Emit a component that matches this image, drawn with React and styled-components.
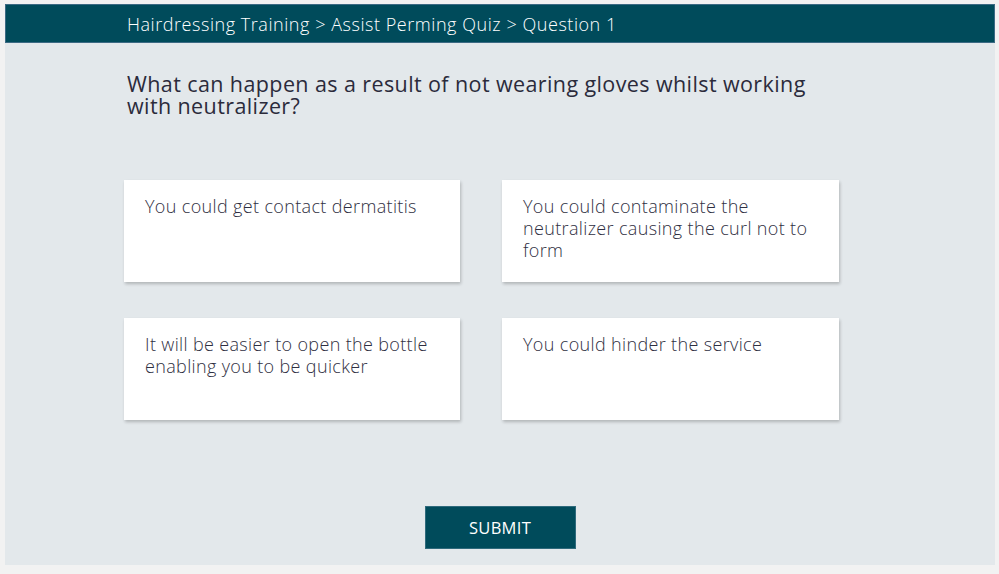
import React from "react";
import styled, { createGlobalStyle } from "styled-components";

const Global = createGlobalStyle`
  html, body { margin: 0; padding: 0; background: #f2f2f2; }
  body { font-family: "Open Sans", "Noto Sans", sans-serif; }
  * { box-sizing: border-box; }
`;

const Frame = styled.div`
  margin: 4px 0 0 5px;
  width: 990px;
  height: 561px;
  background: #e3e8eb;
  display: flex;
  flex-direction: column;
`;

const Header = styled.header`
  height: 39px;
  background: #004b5b;
  border: 1px solid #3c6a84;
  display: flex;
  align-items: center;
  padding-left: 121px;
  color: #ffffff;
  font-family: "Open Sans", sans-serif;
  font-weight: 300;
  font-size: 18px;
  letter-spacing: 0.55px;
`;

const Content = styled.main`
  flex: 1;
  display: flex;
  flex-direction: column;
  padding: 30px 0 0 119px;
`;

const Question = styled.h1`
  margin: 0 0 0 3px;
  width: 700px;
  font-family: "Open Sans", sans-serif;
  font-weight: 400;
  font-size: 21.5px;
  line-height: 22px;
  letter-spacing: 0.4px;
  color: #2b2b3b;
`;

const Options = styled.div`
  display: grid;
  grid-template-columns: 336px 337px;
  column-gap: 42px;
  row-gap: 36px;
  margin-top: 63px;
`;

const Option = styled.div`
  height: 102px;
  background: #ffffff;
  padding: 15px 20px 0 21px;
  box-shadow: 1px 2px 3px rgba(0, 0, 0, 0.22);
  font-family: "Open Sans", sans-serif;
  font-weight: 300;
  font-size: 18px;
  line-height: 22px;
  letter-spacing: 0.35px;
  color: #2f2f42;
  cursor: pointer;
`;

const Footer = styled.div`
  display: flex;
  justify-content: center;
  margin-top: 86px;
  margin-left: -119px;
`;

const Submit = styled.button`
  width: 151px;
  height: 43px;
  background: #004b5b;
  border: 1px solid #2f6a7c;
  color: #ffffff;
  font-family: "Open Sans", sans-serif;
  font-weight: 400;
  font-size: 16.5px;
  letter-spacing: 0.3px;
  cursor: pointer;
`;

const options = [
  "You could get contact dermatitis",
  "You could contaminate the neutralizer causing the curl not to form",
  "It will be easier to open the bottle enabling you to be quicker",
  "You could hinder the service",
];

export default function App() {
  return (
    <>
      <Global />
      <Frame>
        <Header>Hairdressing Training &gt; Assist Perming Quiz &gt; Question 1</Header>
        <Content>
          <Question>
            What can happen as a result of not wearing gloves whilst working with neutralizer?
          </Question>
          <Options>
            {options.map((o) => (
              <Option key={o} role="button">
                {o}
              </Option>
            ))}
          </Options>
          <Footer>
            <Submit>SUBMIT</Submit>
          </Footer>
        </Content>
      </Frame>
    </>
  );
}
